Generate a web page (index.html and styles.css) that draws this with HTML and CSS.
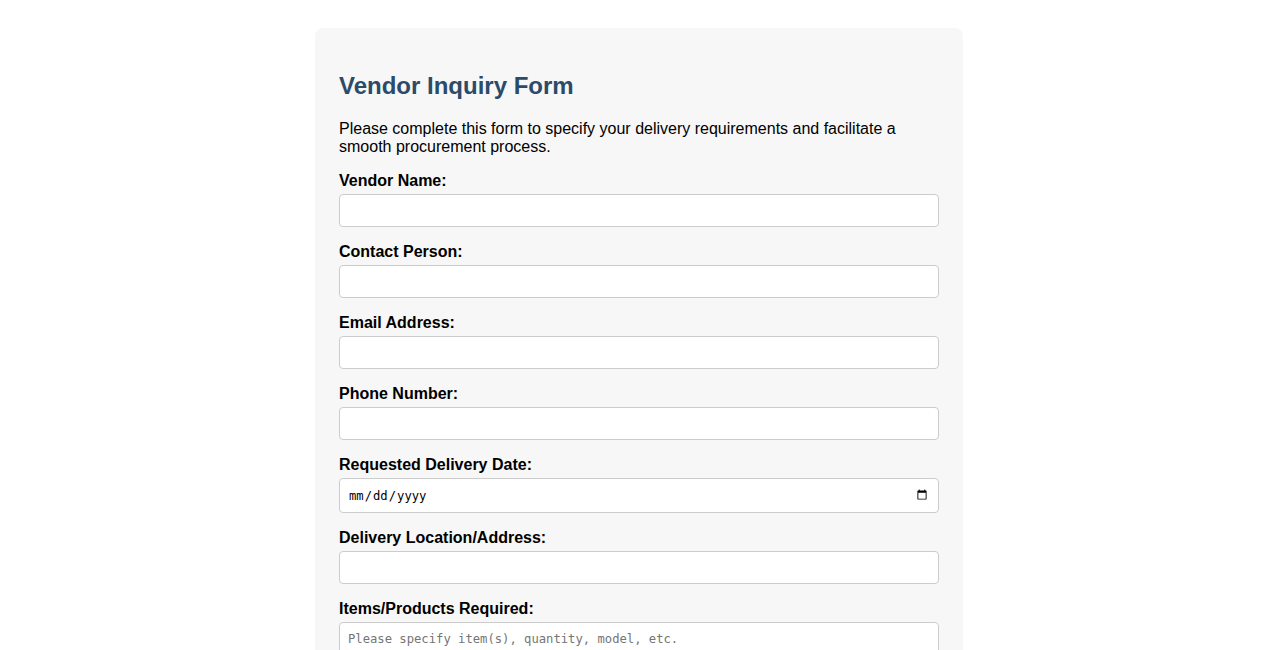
FILE: index.html
```html
<!DOCTYPE html>
<html lang="en">
<head>
<meta charset="utf-8">
<title>Vendor Inquiry Form</title>
<link rel="stylesheet" href="styles.css">
</head>
<body>
<div class="container">
  <h1 class="title">Vendor Inquiry Form</h1>
  <p class="intro">Please complete this form to specify your delivery requirements and facilitate a smooth procurement process.</p>
  <form class="form">
    <label class="label" for="vendor">Vendor Name:</label>
    <input class="field" type="text" id="vendor">
    <label class="label" for="contact">Contact Person:</label>
    <input class="field" type="text" id="contact">
    <label class="label" for="email">Email Address:</label>
    <input class="field" type="email" id="email">
    <label class="label" for="phone">Phone Number:</label>
    <input class="field" type="tel" id="phone">
    <label class="label" for="date">Requested Delivery Date:</label>
    <input class="field field-date" type="date" id="date">
    <label class="label" for="location">Delivery Location/Address:</label>
    <input class="field" type="text" id="location">
    <label class="label" for="items">Items/Products Required:</label>
    <textarea class="field field-area" id="items" rows="4" placeholder="Please specify item(s), quantity, model, etc."></textarea>
  </form>
</div>
</body>
</html>
```

FILE: styles.css
```css
body {
  margin: 0;
  padding: 28px 0 0;
  background: #ffffff;
  font-family: "Liberation Sans", Arial, sans-serif;
  color: #000;
}

.container {
  width: 600px;
  margin: 0 auto;
  padding: 24px;
  background: #f7f7f7;
  border-radius: 8px;
}

.title {
  font-size: 24px;
  font-weight: bold;
  color: #2b4b69;
  margin: 20px 0;
}

.intro {
  font-size: 16px;
  margin: 0 0 16px;
}

.form {
  display: flex;
  flex-direction: column;
}

.label {
  display: block;
  font-weight: bold;
  font-size: 16px;
  margin-bottom: 4px;
}

.field {
  box-sizing: border-box;
  width: 100%;
  padding: 8px;
  margin: 0 0 16px;
  border: 1px solid #cccccc;
  border-radius: 4px;
  background: #ffffff;
  font-size: 13.333px;
}

.field-date {
  font-family: "DejaVu Sans Mono", monospace;
  font-size: 12.2px;
  height: 35px;
}

.field-area {
  font-family: "DejaVu Sans Mono", monospace;
  font-size: 12.2px;
  padding-top: 9px;
  height: 80px;
  resize: vertical;
}

.field-area::placeholder {
  color: #757575;
}
```
